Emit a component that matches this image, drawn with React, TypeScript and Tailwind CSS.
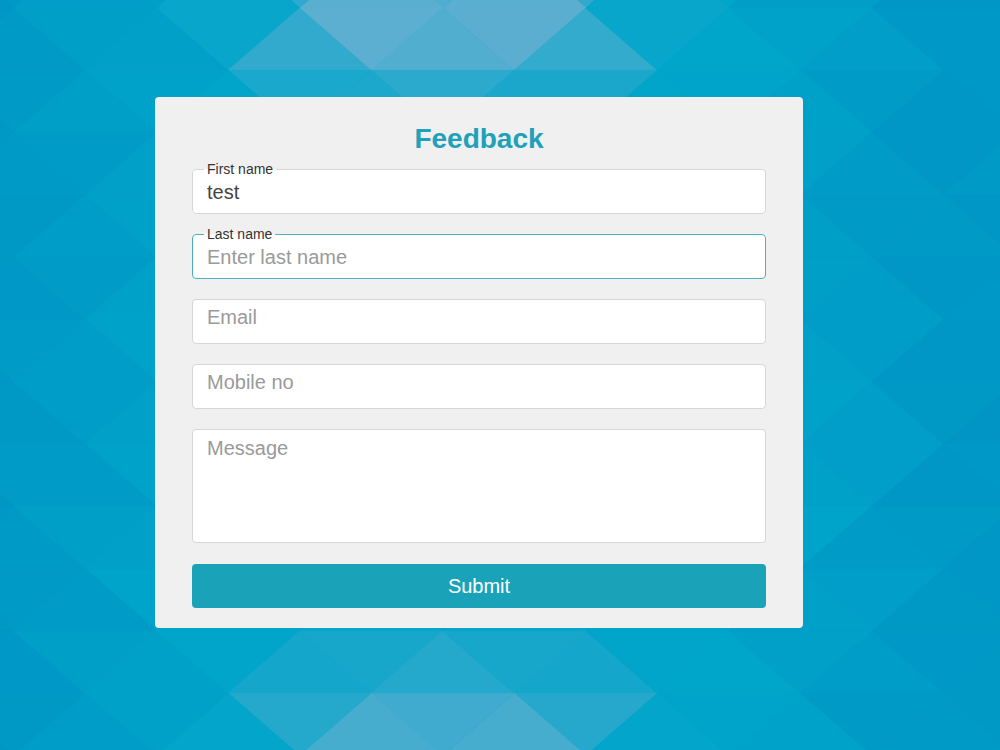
import React from 'react';

// triangle tiling behind the form
const TW = 143;
const TH = 62.3;
const Y0 = 8;

function hash(i: number, j: number) {
  const s = Math.sin(i * 127.1 + j * 311.7) * 43758.5453;
  return s - Math.floor(s);
}

function shade(cx: number, cy: number, h: number) {
  const dx = Math.abs(cx - 470);
  const side = Math.min(1, Math.max(0, (dx - 260) / 220));
  const d = Math.min(1, Math.max(0, side * 0.8 + (h - 0.5) * 0.25));
  const base = [0, 165 - 17 * d, 202 - 5 * d];
  const top = Math.exp(-Math.pow((cx - 443) / 170, 4) - Math.pow((cy - 10) / 90, 2));
  const bot = Math.exp(-Math.pow((cx - 443) / 165, 4) - Math.pow((750 - cy) / 90, 2));
  const f = Math.min(0.58, 0.55 * top + 0.42 * bot);
  const tint = [180, 185, 214];
  const c = base.map((v, k) => Math.round(v + (tint[k] - v) * f));
  return `rgb(${c[0]},${c[1]},${c[2]})`;
}

const Backdrop: React.FC = () => {
  const tris: { pts: string; fill: string }[] = [];
  for (let r = -1; r <= 12; r++) {
    const yt = Y0 + r * TH;
    const yb = yt + TH;
    const even = ((r % 2) + 2) % 2 === 0;
    const aTop = even ? 14 : 85;
    const aBot = even ? 85 : 14;
    for (let j = -2; j <= 9; j++) {
      // pointing down: base on top edge
      const t0 = aTop + j * TW;
      const down = `${t0},${yt} ${t0 + TW},${yt} ${t0 + TW / 2},${yb}`;
      tris.push({ pts: down, fill: shade(t0 + TW / 2, yt + TH / 3, hash(r, j * 2)) });
      // pointing up: base on bottom edge
      const b0 = aBot + j * TW;
      const up = `${b0},${yb} ${b0 + TW},${yb} ${b0 + TW / 2},${yt}`;
      tris.push({ pts: up, fill: shade(b0 + TW / 2, yb - TH / 3, hash(r, j * 2 + 1)) });
    }
  }
  return (
    <svg className="absolute inset-0 h-full w-full" viewBox="0 0 1000 750" preserveAspectRatio="none">
      {tris.map((t, i) => (
        <polygon key={i} points={t.pts} fill={t.fill} stroke={t.fill} strokeWidth={0.6} />
      ))}
    </svg>
  );
};

const LabeledField: React.FC<{ label: string; value?: string; placeholder?: string; focused?: boolean; className?: string }> = ({
  label,
  value,
  placeholder,
  focused,
  className,
}) => (
  <fieldset
    className={`rounded border bg-white pl-[11px] pr-[14px] ${focused ? 'border-[#4fafbf]' : 'border-[#d6d6d6]'} ${className ?? ''}`}
  >
    <legend className="px-[3px] text-[14px] leading-[16px] text-[#333]">{label}</legend>
    <input
      defaultValue={value}
      placeholder={placeholder}
      className="block h-[36px] w-full bg-transparent pb-[6px] pl-[3px] text-[20px] text-[#444] outline-none placeholder:text-[#9a9a9a]"
    />
  </fieldset>
);

const App: React.FC = () => {
  return (
    <div className="relative h-[750px] w-full overflow-hidden bg-[#00a2c9] font-['Liberation_Sans',Arial,sans-serif]">
      <Backdrop />
      <div className="relative flex pl-[155px] pt-[97px]">
        <form className="flex w-[648px] flex-col rounded bg-[#f0f0f0] px-[37px] pb-[20px] pt-[26px]">
          <h1 className="text-center text-[28px] font-bold leading-[32px] text-[#21a1b9]">Feedback</h1>

          <LabeledField label="First name" value="test" className="mt-[6px]" />
          <LabeledField label="Last name" placeholder="Enter last name" focused className="mt-[12px]" />

          <input
            placeholder="Email"
            className="mt-[20px] block h-[45px] w-full rounded border border-[#d6d6d6] bg-white px-[14px] pb-2 text-[20px] text-[#444] outline-none placeholder:text-[#9a9a9a]"
          />
          <input
            placeholder="Mobile no"
            className="mt-[20px] block h-[45px] w-full rounded border border-[#d6d6d6] bg-white px-[14px] pb-2 text-[20px] text-[#444] outline-none placeholder:text-[#9a9a9a]"
          />
          <textarea
            placeholder="Message"
            className="mt-[20px] block h-[114px] w-full resize-none rounded border border-[#d6d6d6] bg-white px-[14px] pt-[3px] text-[20px] text-[#444] outline-none placeholder:text-[#9a9a9a]"
          />

          <button
            type="button"
            className="mt-[21px] h-[44px] w-full rounded bg-[#1aa3b8] text-[20px] text-white"
          >
            Submit
          </button>
        </form>
      </div>
    </div>
  );
};

export default App;
